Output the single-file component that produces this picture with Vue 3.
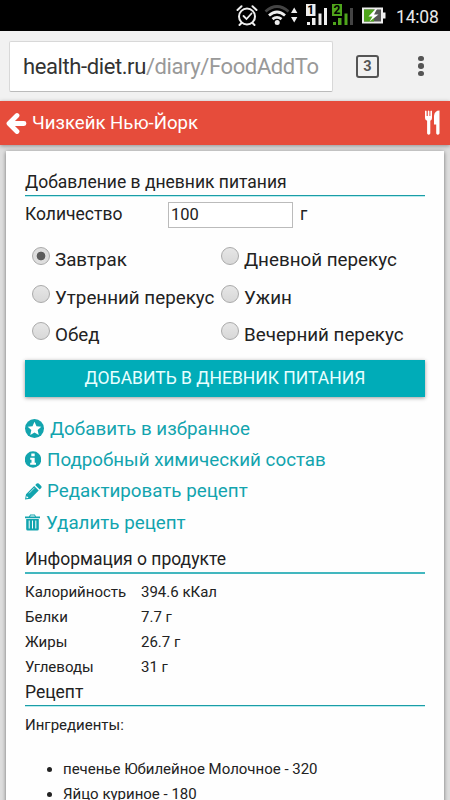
<template>
  <div class="phone">
    <div class="status">
      <svg class="status__icons" width="156" height="31" viewBox="0 0 156 31">
        <g fill="none" stroke="#eee" stroke-width="2" stroke-linecap="round">
          <circle cx="15" cy="16.500" r="8" />
          <path d="M5.500 10l4-3.700M24.500 10l-4-3.700M9.500 23l-2 2M20.500 23l2 2" />
          <path d="M11.500 16l3 3 5-5.500" stroke-width="1.800" />
        </g>
        <g fill="none" stroke-width="2.800">
          <path d="M33.500 11.500Q45 1.500 56.500 11.500" stroke="#444" />
          <path d="M37 15.500Q45 8.500 53 15.500" stroke="#eee" />
          <path d="M40.500 19.200Q45 15.500 49.500 19.200" stroke="#eee" />
        </g>
        <circle cx="45.200" cy="22.500" r="2.500" fill="#eee" />
        <path d="M59 13l3.200-5.500 3.200 5.500zM59 17l3.200 5.500 3.200-5.500z" fill="#eee" />
        <path d="M74 4h9.500v12H74z" fill="#eee" />
        <g fill="#eee">
          <path d="M75 22h3v3h-3zM80 18h3.500v7H80zM86.500 13.500h3V25h-3zM92 8h3v17h-3z" />
        </g>
        <path d="M100 4h10v12h-10z" fill="#4fa51c" />
        <path d="M101 22h3v3h-3zM106 18h3.500v7H106zM112.500 13.500h3V25h-3z" fill="#4fa51c" />
        <path d="M118 8h3v17h-3z" fill="#444" />
        <text x="78.700" y="14" class="status__sim">1</text>
        <text x="105" y="14" class="status__sim">2</text>
        <rect x="131" y="8.500" width="19" height="14" fill="#555" stroke="#eee" stroke-width="2" />
        <path d="M132 9.500h10v12h-10z" fill="#4fa51c" />
        <path d="M151 12.500h2.500v6H151z" fill="#eee" />
        <path d="M143.500 9l-7 7.500h4l-3 5 9-7h-4.500l3-5.500z" fill="#fff" />
      </svg>
      <span class="status__time">14:08</span>
    </div>

    <div class="browser">
      <div class="browser__url">health-diet.ru<span>/diary/FoodAddTo</span></div>
      <div class="browser__tabs">3</div>
      <div class="browser__menu"><i /><i /><i /></div>
    </div>

    <header class="header">
      <svg width="21" height="22" viewBox="0 0 21 22">
        <path
          d="M11 3.500L3 11.500l8 8M4 11.500h14"
          fill="none"
          stroke="#fff"
          stroke-width="4.800"
          stroke-linecap="round"
          stroke-linejoin="round"
        />
      </svg>
      <span class="header__title">Чизкейк Нью-Йорк</span>
      <svg class="header__food" width="15" height="26" viewBox="0 0 15 26">
        <path
          d="M0 1.200Q.8 0 1.600 1.200V6h1.200V1.200q.8-1.200 1.600 0V6h1V1.200q.8-1.200 1.600 0V8Q7 10 5.300 10.800V23.500q-1.600 2.500-3.200 0V10.800Q0 10 0 8zM14.500.5V23.500q-1.700 2.500-3.300 0V14.500H9V6Q9.500.5 14.500.5z"
          fill="#fff"
        />
      </svg>
    </header>

    <main class="card">
      <h2 class="heading heading--first">Добавление в дневник питания</h2>
      <div class="amount">
        <label class="amount__label" for="amount">Количество</label>
        <input id="amount" v-model="amount" class="amount__input" type="text" />
        <span>г</span>
      </div>

      <div class="meals">
        <label v-for="item in meals" :key="item" class="meal">
          <input v-model="meal" class="meal__radio" type="radio" :value="item" />
          <span>{{ item }}</span>
        </label>
      </div>

      <button class="submit">ДОБАВИТЬ В ДНЕВНИК ПИТАНИЯ</button>

      <nav class="links">
        <a class="link link--favorite">
          <svg width="19" height="19" viewBox="0 0 19 19">
            <circle cx="9.500" cy="9.500" r="9.500" />
            <path
              class="cut"
              d="M9.500 2.800l2 4.500 4.800.5-3.600 3.300 1 4.800-4.200-2.500-4.200 2.500 1-4.800-3.600-3.300 4.800-.5z"
            />
          </svg>
          <span>Добавить в избранное</span>
        </a>
        <a class="link link--info">
          <svg width="16" height="17" viewBox="0 0 16 17">
            <circle cx="8" cy="8.500" r="8.200" />
            <path class="cut" d="M6.300 2.500h3.400v2.800H6.300zM5.200 6.800h4.500v5H11v2H5.200v-2h1.300v-3H5.200z" />
          </svg>
          <span>Подробный химический состав</span>
        </a>
        <a class="link link--edit">
          <svg width="17" height="17" viewBox="0 0 17 17">
            <path d="M0 16.500l1-5.300L9.200 3l4.500 4.500-8.200 8.200zM10.200 2L11.700.6q1-.8 2 0l2.500 2.500q.8 1 0 2l-1.500 1.400z" />
            <path class="cut" d="M1.700 13l1.800 1.800-1.800.4-.4-.4z" />
            <path d="M4 10.300l5.500-5.500" stroke="#fff" stroke-width=".7" />
          </svg>
          <span>Редактировать рецепт</span>
        </a>
        <a class="link link--remove">
          <svg width="15" height="17" viewBox="0 0 15 17">
            <path d="M0 2.500h4L5.200.5h4.600l1.200 2h4V4.200H0zM1.200 5h12.600v10q0 1.500-1.500 1.500H2.700q-1.500 0-1.500-1.500z" />
            <path class="cut" d="M5.700 1.500h3.600l.6 1H5.100zM3.700 6.500h1v8h-1zM7 6.500h1v8H7zM10.300 6.500h1v8h-1z" />
          </svg>
          <span>Удалить рецепт</span>
        </a>
      </nav>

      <h2 class="heading heading--info">Информация о продукте</h2>
      <dl class="facts">
        <template v-for="fact in facts" :key="fact.name">
          <dt>{{ fact.name }}</dt>
          <dd>{{ fact.value }}</dd>
        </template>
      </dl>

      <h2 class="heading heading--recipe">Рецепт</h2>
      <p class="caption">Ингредиенты:</p>
      <ul class="ingredients">
        <li v-for="item in ingredients" :key="item">{{ item }}</li>
      </ul>
    </main>
  </div>
</template>

<script setup>
import { ref } from 'vue'

const amount = ref('100')
const meal = ref('Завтрак')

const meals = [
  'Завтрак',
  'Дневной перекус',
  'Утренний перекус',
  'Ужин',
  'Обед',
  'Вечерний перекус',
]

const facts = [
  { name: 'Калорийность', value: '394.6 кКал' },
  { name: 'Белки', value: '7.7 г' },
  { name: 'Жиры', value: '26.7 г' },
  { name: 'Углеводы', value: '31 г' },
]

const ingredients = ['печенье Юбилейное Молочное - 320', 'Яйцо куриное - 180']
</script>

<style>
body {
  margin: 0;
  overflow: hidden;
}
</style>

<style scoped>
.phone {
  display: flex;
  flex-direction: column;
  width: 450px;
  height: 800px;
  overflow: hidden;
  background: #dedede;
  color: #222;
  font-family: Roboto, "Noto Sans", sans-serif;
  white-space: nowrap;
}

.phone * {
  box-sizing: border-box;
}

.phone svg {
  flex: none;
}

.status {
  display: flex;
  flex: none;
  align-items: center;
  height: 31px;
  padding-left: 232px;
  background: #000;
}

.status__sim {
  fill: #000;
  font-size: 12px;
  font-weight: 700;
  text-anchor: middle;
}

.status__time {
  margin: 2px 0 0 8px;
  color: #e8e8e8;
  font-size: 17.5px;
  letter-spacing: -0.2px;
}

.browser {
  display: flex;
  flex: none;
  align-items: center;
  height: 70px;
  padding-left: 9px;
  background: #f1f1f1;
}

.browser__url {
  width: 324px;
  height: 51px;
  padding-left: 13px;
  background: #fff;
  border: 1px solid #d8d8d8;
  border-bottom-color: #bbb;
  border-radius: 2px;
  color: #333;
  font-size: 22px;
  letter-spacing: -0.4px;
  line-height: 50px;
}

.browser__url span {
  color: #999;
}

.browser__tabs {
  width: 23px;
  height: 23px;
  margin-left: 23px;
  border: 2px solid #555;
  border-radius: 3px;
  color: #555;
  font-size: 14.5px;
  font-weight: 700;
  line-height: 19px;
  text-align: center;
}

.browser__menu {
  display: grid;
  gap: 2px;
  margin-left: 39px;
}

.browser__menu i {
  width: 5.5px;
  height: 5.5px;
  background: #555;
  border-radius: 50%;
}

.header {
  position: relative;
  display: flex;
  flex: none;
  align-items: center;
  height: 44px;
  padding: 0 10px 0 6px;
  background: #e64c3b;
  box-shadow: 0 1px 4px rgba(0, 0, 0, 0.35);
}

.header__title {
  margin-left: 5px;
  color: #fff;
  font-size: 18.6px;
  line-height: 44px;
}

.header__food {
  margin-left: auto;
}

.card {
  flex: none;
  width: 438px;
  height: 700px;
  margin: 6px 0 0 6px;
  padding: 18px 19px 0;
  background: #fefefe;
  box-shadow: 0 1px 4px rgba(0, 0, 0, 0.5);
}

.heading {
  height: 27px;
  margin: 0;
  border-bottom: 1px solid #1b9da6;
  box-shadow: 0 1px #b9ecef;
  font-size: 17.5px;
  font-weight: 400;
  line-height: 26px;
}

.amount {
  display: flex;
  height: 45px;
  padding-top: 6px;
  font-size: 17.5px;
  line-height: 25px;
}

.amount__label {
  width: 143px;
}

.amount__input {
  width: 125px;
  height: 26px;
  margin-right: 7px;
  padding: 0 2px 2px;
  background: #fff;
  border: 1px solid #bbb;
  border-radius: 0;
  color: #222;
  font: 16.5px Roboto, sans-serif;
}

.meals {
  display: grid;
  grid-template-columns: 189px 1fr;
  grid-auto-rows: 37.5px;
  height: 119px;
  padding-left: 7px;
}

.meal {
  display: flex;
  font-size: 18.8px;
  line-height: 39px;
}

.meal__radio {
  width: 18px;
  height: 18px;
  margin: 6px 5px 0 0;
  appearance: none;
  background: linear-gradient(#e6e6e6, #d8d8d8);
  border: 1px solid #aaa;
  border-radius: 50%;
}

.meal__radio:checked {
  background: radial-gradient(circle, #5c5c5c 4px, #dedede 4.7px);
}

.submit {
  display: block;
  width: 400px;
  height: 37px;
  padding: 0;
  background: #00acb8;
  border: 0;
  box-shadow: 0 1px 4px rgba(0, 0, 0, 0.4);
  color: #e8ffff;
  font: 17.5px/37px Roboto, sans-serif;
}

.links {
  display: grid;
  grid-auto-rows: 31.3px;
  height: 149px;
  padding-top: 16px;
}

.link {
  display: flex;
  align-items: center;
  color: #12a4ae;
  font-size: 18.8px;
}

.link svg {
  margin-right: 6px;
  fill: #12a4ae;
}

.link--edit svg {
  margin-right: 5px;
}

.link .cut {
  fill: #fff;
}

.heading--info {
  height: 28px;
  border-bottom: 2px solid #42b7bf;
  box-shadow: none;
}

.facts {
  display: grid;
  grid-template-columns: 116px 1fr;
  grid-auto-rows: 25px;
  height: 105px;
  margin: 0;
  padding-top: 6px;
  font-size: 15px;
  line-height: 25px;
}

.facts dd {
  margin: 0;
}

.caption {
  margin: 0;
  padding-top: 7px;
  font-size: 15px;
  line-height: 25px;
}

.ingredients {
  margin: 19px 0 0;
  padding-left: 38px;
  font-size: 15px;
  line-height: 25px;
}
</style>
